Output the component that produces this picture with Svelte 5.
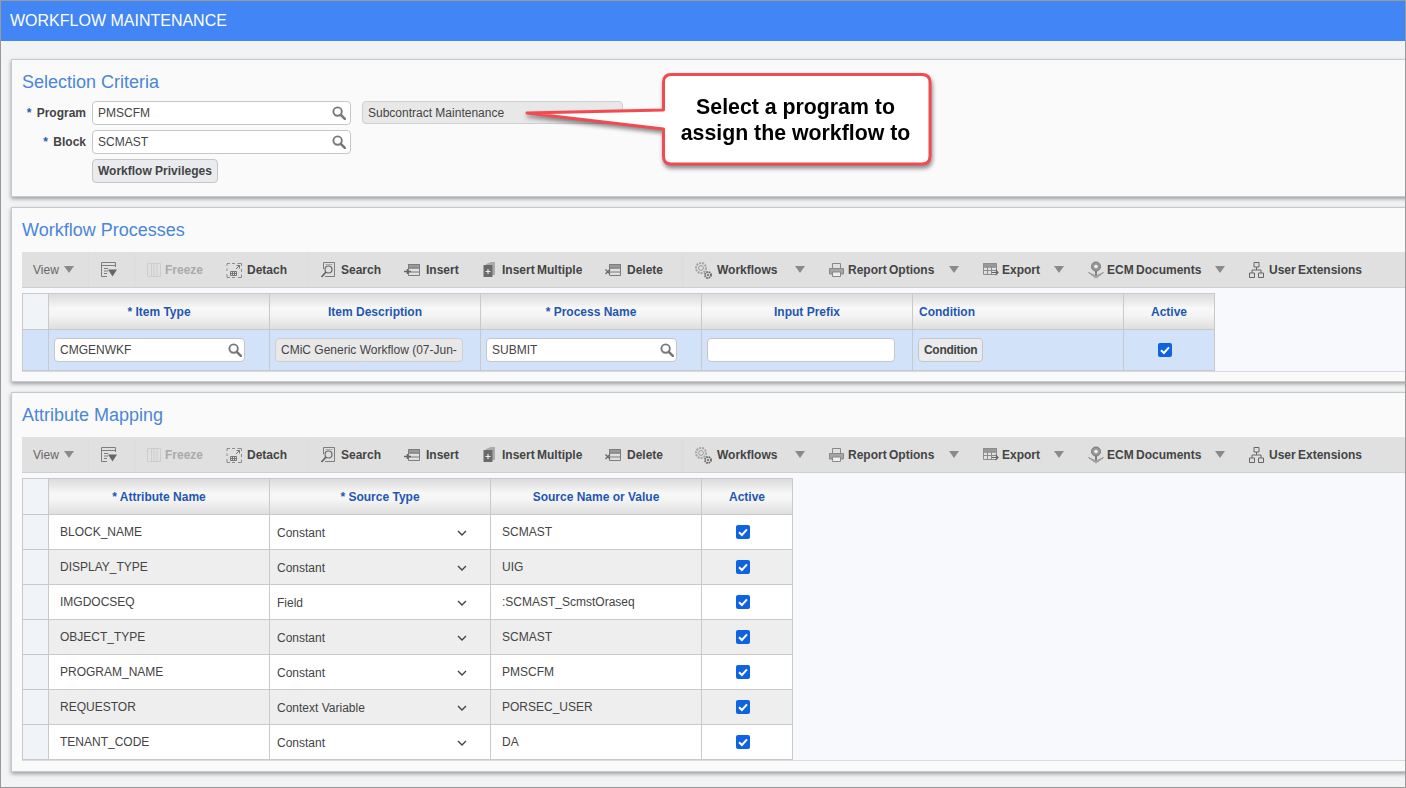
<script>
  const tools = [
    { label: 'View', w: 67, kind: 'view', arrow: true },
    { icon: 'filter', w: 46, tx: 18 },
    { label: 'Freeze', icon: 'freeze', w: 80, tx: 19, off: true },
    { label: 'Detach', icon: 'detach', w: 94, tx: 21 },
    { label: 'Search', icon: 'search', w: 83, tx: 21 },
    { label: 'Insert', icon: 'insert', w: 79, tx: 23 },
    { label: 'Insert Multiple', icon: 'multi', w: 122, tx: 20 },
    { label: 'Delete', icon: 'delete', w: 90, tx: 23 },
    { label: 'Workflows', icon: 'gears', w: 134, tx: 23, arrow: true },
    { label: 'Report Options', icon: 'print', w: 154, tx: 20, arrow: true },
    { label: 'Export', icon: 'export', w: 105, tx: 20, arrow: true },
    { label: 'ECM Documents', icon: 'ecm', w: 161, tx: 20, arrow: true },
    { label: 'User Extensions', icon: 'tree', w: 130, tx: 21 }
  ];

  const mappings = [
    ['BLOCK_NAME', 'Constant', 'SCMAST'],
    ['DISPLAY_TYPE', 'Constant', 'UIG'],
    ['IMGDOCSEQ', 'Field', ':SCMAST_ScmstOraseq'],
    ['OBJECT_TYPE', 'Constant', 'SCMAST'],
    ['PROGRAM_NAME', 'Constant', 'PMSCFM'],
    ['REQUESTOR', 'Context Variable', 'PORSEC_USER'],
    ['TENANT_CODE', 'Constant', 'DA']
  ];
</script>

{#snippet glass()}
  <svg class="glass" width="14" height="14" viewBox="0 0 14 14">
    <circle cx="5.6" cy="5.6" r="4.2" fill="#fff" stroke="#777" stroke-width="1.9" />
    <path d="M8.8 8.8 L12.8 12.8" stroke="#777" stroke-width="2.6" stroke-linecap="round" />
  </svg>
{/snippet}

{#snippet check()}
  <svg class="check" width="14" height="14" viewBox="0 0 14 14">
    <rect width="14" height="14" rx="2" fill="#0f62e0" />
    <path d="M3 7.2 L5.9 10 L11 4.4" fill="none" stroke="#fff" stroke-width="2" />
  </svg>
{/snippet}

{#snippet toolIcon(name)}
  <svg class="ticon" width="18" height="18" viewBox="0 0 18 18" fill="none" stroke="#7d7d7d" stroke-width="1">
    {#if name === 'filter'}
      <path d="M1.5 1.5 H15.5 V6 M1.5 4.5 H15.5 M1.5 1.5 V15.5 H7 M4 7.5 H8 M4 10 H8 M4 12.500 H7" />
      <path d="M8 8.500 H17 L12.500 15.500 Z" fill="#666" stroke="none" />
    {:else if name === 'freeze'}
      <path d="M1.5 2.5 H14.5 V15.500 H1.5 Z M5.500 2.5 V15.500 M8 2.5 V15.500 M11 2.5 V15.500" stroke="#cdcdcd" />
    {:else if name === 'detach'}
      <path d="M1 5 V2.500 H4 M6 2.500 H9 M11.500 2.500 H15.500 V5 M15.500 8 V11 M15.500 13.500 V16.500 H12 M9 16.500 H6 M4 16.500 H1 V13 M1 10 V7.500" stroke="#8c8c8c" />
      <path d="M4.500 10.500 H10.500 V14.500 H4.500 Z M6.500 10.500 V14.500 M8.500 10.500 V14.500 M4.500 12.500 H10.500" stroke="#777" />
      <path d="M10 8 L13.500 4.500 M10.500 4.500 H13.500 V7.500" stroke="#777" />
    {:else if name === 'search'}
      <path d="M3.500 8 V1.500 H14.500 V15.500 H5" />
      <path d="M5.500 3.500 H12.500" stroke="#aaa" />
      <circle cx="8.500" cy="8.500" r="3.500" stroke="#666" stroke-width="1.2" />
      <path d="M6 11 L1.500 16" stroke="#666" stroke-width="1.8" />
    {:else if name === 'insert'}
      <path d="M5.500 3.500 H16.500 V14.500 H5.500 Z M5.500 7 H16.500 M5.500 11 H16.500" />
      <path d="M5.500 3.500 H16.500 V7 H5.500 Z" fill="#999" />
      <path d="M1 10.500 H8 M4.500 8 V13" stroke="#666" stroke-width="1.5" />
    {:else if name === 'multi'}
      <path d="M4 3 L9 1 H13 V14 H4 Z" fill="#aaa" stroke="none" />
      <path d="M1.500 4 H10.500 V16 H1.500 Z" fill="#6a6a6a" stroke="none" />
      <path d="M3.500 10.500 H8.500 M6 8 V13" stroke="#eee" stroke-width="1.1" />
    {:else if name === 'delete'}
      <path d="M5.500 3.500 H16.500 V14.500 H5.500 Z M5.500 7 H16.500 M5.500 11 H16.500" />
      <path d="M5.500 3.500 H16.500 V7 H5.500 Z" fill="#999" />
      <path d="M1.500 8.500 L6 13 M6 8.500 L1.500 13" stroke="#666" stroke-width="1.3" />
    {:else if name === 'gears'}
      <circle cx="7" cy="7" r="5" stroke="#a5a5a5" stroke-width="2" stroke-dasharray="2 1" />
      <circle cx="7" cy="7" r="2.400" stroke="#999" />
      <circle cx="14" cy="14" r="3" stroke="#666" stroke-width="1.800" stroke-dasharray="1.600 .8" />
      <circle cx="14" cy="14" r="1" fill="#666" stroke="none" />
    {:else if name === 'print'}
      <path d="M4.500 7 V2.500 H12.500 V7" stroke="#888" />
      <path d="M1.500 7.500 H15.500 V13 H1.500 Z" fill="#a5a5a5" stroke="#888" />
      <path d="M4.500 11 H12.500 V15.500 H4.500 Z" fill="#eee" stroke="#888" />
    {:else if name === 'export'}
      <path d="M1.500 2.500 H14.500 V13.500 H1.500 Z M1.500 6 H14.500 M5.500 6 V13.500 M9.500 6 V13.500 M1.500 9.500 H14.500" stroke="#8c8c8c" />
      <path d="M1.500 2.500 H14.500 V6 H1.500 Z" fill="#999" stroke="#8c8c8c" />
      <path d="M10 11.500 H15.500 M13.500 9 L16 11.500 L13.500 14" stroke="#666" stroke-width="1.200" />
    {:else if name === 'ecm'}
      <path d="M1.500 11.500 L9 15 L16.500 11.500 L9 17 Z" fill="#b5b5b5" stroke="#999" />
      <circle cx="9" cy="5.500" r="4.500" fill="#9a9a9a" stroke="#777" />
      <circle cx="9" cy="5.500" r="1.800" fill="#eee" stroke="none" />
      <path d="M9 10 V14.500" stroke="#666" stroke-width="1.500" />
    {:else if name === 'tree'}
      <path d="M6 1.500 H11 V6 H6 Z M1.500 12 H6.500 V16.500 H1.500 Z M10.500 12 H15.500 V16.500 H10.500 Z" stroke="#666" />
      <path d="M8.500 6 V9 M4 12 V9 H13 V12" stroke="#666" />
    {/if}
  </svg>
{/snippet}

{#snippet toolbar()}
  <div class="toolbar">
    {#each tools as t, i}
      <div class="tool" class:off={t.off} class:plain={t.kind === 'view'} class:sep={i === 1 || i === 2 || i === 4 || i === 8} style="width:{t.w}px">
        {#if t.icon}
          <span class="iconbox" style="width:{t.tx}px">{@render toolIcon(t.icon)}</span>
        {/if}
        {#if t.label}<span>{t.label}</span>{/if}
        {#if t.arrow}<i class="arrow"></i>{/if}
      </div>
    {/each}
  </div>
{/snippet}

<div class="page">
  <header>WORKFLOW MAINTENANCE</header>

  <main>
    <section class="panel first">
      <h2>Selection Criteria</h2>
      <div class="form">
        <label class="lab" for="prog"><em>*</em> Program</label>
        <div class="lookup wide"><input id="prog" value="PMSCFM" />{@render glass()}</div>
        <div class="readonly">Subcontract Maintenance</div>

        <label class="lab" for="blk"><em>*</em> Block</label>
        <div class="lookup wide"><input id="blk" value="SCMAST" />{@render glass()}</div>
        <span></span>

        <span></span>
        <div><button class="btn">Workflow Privileges</button></div>
      </div>
    </section>

    <section class="panel second">
      <h2>Workflow Processes</h2>
      {@render toolbar()}
      <div class="gridwrap">
        <table class="processes">
          <thead>
            <tr>
              <th class="rowhead"></th>
              <th>* Item Type</th>
              <th>Item Description</th>
              <th>* Process Name</th>
              <th>Input Prefix</th>
              <th class="left">Condition</th>
              <th>Active</th>
            </tr>
          </thead>
          <tbody>
            <tr class="selected">
              <td></td>
              <td><div class="lookup"><input value="CMGENWKF" />{@render glass()}</div></td>
              <td><div class="readonly small">CMiC Generic Workflow (07-Jun-</div></td>
              <td><div class="lookup"><input value="SUBMIT" />{@render glass()}</div></td>
              <td><div class="lookup"><input value="" /></div></td>
              <td><button class="btn cond">Condition</button></td>
              <td class="center">{@render check()}</td>
            </tr>
          </tbody>
        </table>
      </div>
    </section>

    <section class="panel third">
      <h2>Attribute Mapping</h2>
      {@render toolbar()}
      <div class="gridwrap">
        <table class="mapping">
          <thead>
            <tr>
              <th class="rowhead"></th>
              <th>* Attribute Name</th>
              <th>* Source Type</th>
              <th>Source Name or Value</th>
              <th>Active</th>
            </tr>
          </thead>
          <tbody>
            {#each mappings as row, i}
              <tr class:alt={i % 2 === 1}>
                <td class="rowcell"></td>
                <td class="name">{row[0]}</td>
                <td class="type">
                  <div class="select">
                    {row[1]}
                    <svg width="10" height="6" viewBox="0 0 10 6"><path d="M1 1 L5 5 L9 1" fill="none" stroke="#444" stroke-width="1.4" /></svg>
                  </div>
                </td>
                <td class="name">{row[2]}</td>
                <td class="center">{@render check()}</td>
              </tr>
            {/each}
          </tbody>
        </table>
      </div>
    </section>
  </main>

  <svg class="callout" width="1406" height="200" viewBox="0 0 1406 200">
    <path
      d="M671 74.500 H922 Q930 74.500 930 82.500 V156 Q930 164 922 164 H671 Q663.500 164 663.500 156 V129 L527 113 L663.500 110 V82.500 Q663.500 74.500 671 74.500 Z"
      fill="#fff" stroke="#f24a50" stroke-width="3" stroke-linejoin="round"
    />
    <text x="795.500" y="113.500">Select a program to</text>
    <text x="795.500" y="139.500">assign the workflow to</text>
  </svg>
</div>

<style>
  :global(body) {
    margin: 0;
    font-family: "Liberation Sans", Arial, sans-serif;
  }

  .page {
    position: relative;
    width: 1406px;
    height: 788px;
    box-sizing: border-box;
    border: 1px solid #999;
    background: #f2f3f5;
    overflow: hidden;
    font-size: 12px;
    color: #444;
  }

  header {
    height: 40px;
    line-height: 39px;
    padding-left: 9px;
    background: #4285f4;
    color: #fff;
    font-size: 16px;
  }

  main {
    padding: 18px 0 0 10px;
  }

  .panel {
    box-sizing: border-box;
    margin: 0 -10px 10px 0;
    padding: 11px 0 0 10px;
    border: 1px solid #c9c9c9;
    background: #fafafa;
    box-shadow: 0 2px 4px rgba(0, 0, 0, 0.35);
  }

  .first { height: 138px; }
  .second { height: 175px; }
  .third { height: 380px; }

  h2 {
    margin: 0;
    height: 22px;
    line-height: 22px;
    font-size: 18px;
    font-weight: normal;
    color: #4a86d8;
  }

  .form {
    display: grid;
    grid-template-columns: 64px 259px 266px;
    column-gap: 6px;
    row-gap: 5px;
    margin-top: 8px;
    grid-auto-rows: 24px;
  }

  .form .readonly {
    margin-left: 5px;
    height: 23px;
  }

  .lab {
    align-self: center;
    text-align: right;
    font-weight: bold;
  }

  em {
    font-style: normal;
    color: #2a5db0;
    margin-right: 2px;
  }

  .lookup {
    position: relative;
    height: 24px;
    box-sizing: border-box;
    border: 1px solid #c6c6c6;
    border-radius: 4px;
    background: #fff;
  }

  .lookup input {
    width: 100%;
    height: 100%;
    box-sizing: border-box;
    border: 0;
    outline: 0;
    padding: 0 22px 1px 5px;
    background: transparent;
    font: 12px "Liberation Sans", Arial, sans-serif;
    color: #444;
    border-radius: 4px;
  }

  .glass {
    position: absolute;
    right: 4px;
    top: 4px;
  }

  .readonly {
    box-sizing: border-box;
    height: 24px;
    line-height: 22px;
    padding-left: 5px;
    border: 1px solid #cfcfcf;
    border-radius: 4px;
    background: #e8e8e8;
    white-space: nowrap;
    overflow: hidden;
  }

  .btn {
    height: 24px;
    padding: 0 5px;
    border: 1px solid #c6c6c6;
    border-radius: 4px;
    background: #e9ebee;
    color: #444;
    font: bold 12px "Liberation Sans", Arial, sans-serif;
  }

  .cond {
    display: block;
    letter-spacing: -0.3px;
  }

  .toolbar {
    display: flex;
    align-items: center;
    box-sizing: border-box;
    height: 36px;
    margin-top: 12px;
    padding-left: 11px;
    background: #e0e0e0;
    border-bottom: 1px solid #cfcfcf;
    font-weight: bold;
    word-spacing: -1px;
    white-space: nowrap;
  }

  .panel h2 + .toolbar {
    margin-top: 11px;
  }

  .tool {
    display: flex;
    align-items: center;
    flex: none;
    position: relative;
    height: 34px;
    box-sizing: border-box;
  }

  .tool.plain {
    font-weight: normal;
    color: #666;
  }

  .tool.off {
    color: #aaa;
  }

  .iconbox {
    display: flex;
    flex: none;
  }

  .ticon {
    flex: none;
  }

  .tool.sep::before {
    content: "";
    position: absolute;
    left: -12px;
    top: 0;
    bottom: 0;
    border-left: 1px solid #dcdcdc;
  }

  .arrow {
    width: 0;
    height: 0;
    margin-left: auto;
    margin-right: 23px;
    border-left: 5px solid transparent;
    border-right: 5px solid transparent;
    border-top: 7px solid #8a8a8a;
  }

  .tool.plain .arrow {
    margin-left: 5px;
    margin-right: 0;
  }

  .gridwrap {
    padding-top: 5px;
    background: #f8f9fd;
    border-bottom: 1px solid #d8d9e2;
  }

  table {
    border-collapse: collapse;
    table-layout: fixed;
  }

  .processes { width: 1192px; }
  .mapping { width: 770px; }

  .processes th:nth-child(1) { width: 26px; }
  .processes th:nth-child(2) { width: 221px; }
  .processes th:nth-child(3) { width: 211px; }
  .processes th:nth-child(4) { width: 221px; }
  .processes th:nth-child(5) { width: 211px; }
  .processes th:nth-child(6) { width: 211px; }
  .processes th:nth-child(7) { width: 91px; }

  .mapping th:nth-child(1) { width: 26px; }
  .mapping th:nth-child(2) { width: 221px; }
  .mapping th:nth-child(3) { width: 221px; }
  .mapping th:nth-child(4) { width: 211px; }
  .mapping th:nth-child(5) { width: 91px; }

  th, td {
    box-sizing: border-box;
  }

  th {
    height: 36px;
    padding: 0;
    border: 1px solid #c9c9c9;
    background: linear-gradient(#dcdcdc, #f8f8f8 40%, #f4f4f4 60%, #dedede);
    color: #1f56b3;
    font-size: 12px;
    font-weight: bold;
    text-align: center;
  }

  th.left {
    text-align: left;
    padding-left: 6px;
  }

  th.rowhead {
    background: #f0f3f8;
  }

  td {
    padding: 0 5px;
    border: 1px solid #c9c9c9;
    background: #fff;
  }

  .processes td {
    height: 41px;
    background: #d2e2f9;
  }

  .processes td:nth-child(2) .lookup { width: 191px; }
  .processes td:nth-child(3) .readonly { width: 188px; }
  .processes td:nth-child(4) .lookup { width: 191px; }
  .processes td:nth-child(5) .lookup { width: 188px; }

  .processes input {
    padding-bottom: 0;
  }

  .processes .glass {
    right: 2px;
  }

  .mapping td {
    height: 35px;
  }

  .mapping td.rowcell {
    background: #f0f3f8;
  }

  .mapping tr.alt td:not(.rowcell) {
    background: #eeeeee;
  }

  .mapping td.name {
    padding: 0 0 0 11px;
  }

  .select {
    display: flex;
    align-items: center;
    justify-content: space-between;
    padding: 1px 18px 0 2px;
  }

  .center {
    text-align: center;
  }

  .check {
    display: block;
    margin: 0 auto;
    transform: translateX(-4px);
  }

  .callout {
    position: absolute;
    left: -1px;
    top: -1px;
    pointer-events: none;
    filter: drop-shadow(1px 3px 2px rgba(0, 0, 0, 0.45));
  }

  .callout text {
    font: bold 21.300px "Liberation Sans", Arial, sans-serif;
    fill: #000;
    text-anchor: middle;
  }
</style>
